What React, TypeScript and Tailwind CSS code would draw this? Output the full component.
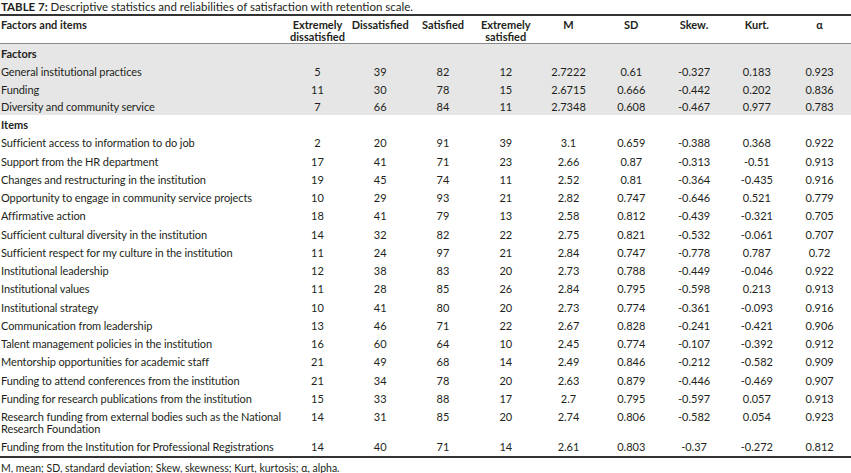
const factors = [
  ["General institutional practices", "5", "39", "82", "12", "2.7222", "0.61", "-0.327", "0.183", "0.923"],
  ["Funding", "11", "30", "78", "15", "2.6715", "0.666", "-0.442", "0.202", "0.836"],
  ["Diversity and community service", "7", "66", "84", "11", "2.7348", "0.608", "-0.467", "0.977", "0.783"],
];

const items = [
  ["Sufficient access to information to do job", "2", "20", "91", "39", "3.1", "0.659", "-0.388", "0.368", "0.922"],
  ["Support from the HR department", "17", "41", "71", "23", "2.66", "0.87", "-0.313", "-0.51", "0.913"],
  ["Changes and restructuring in the institution", "19", "45", "74", "11", "2.52", "0.81", "-0.364", "-0.435", "0.916"],
  ["Opportunity to engage in community service projects", "10", "29", "93", "21", "2.82", "0.747", "-0.646", "0.521", "0.779"],
  ["Affirmative action", "18", "41", "79", "13", "2.58", "0.812", "-0.439", "-0.321", "0.705"],
  ["Sufficient cultural diversity in the institution", "14", "32", "82", "22", "2.75", "0.821", "-0.532", "-0.061", "0.707"],
  ["Sufficient respect for my culture in the institution", "11", "24", "97", "21", "2.84", "0.747", "-0.778", "0.787", "0.72"],
  ["Institutional leadership", "12", "38", "83", "20", "2.73", "0.788", "-0.449", "-0.046", "0.922"],
  ["Institutional values", "11", "28", "85", "26", "2.84", "0.795", "-0.598", "0.213", "0.913"],
  ["Institutional strategy", "10", "41", "80", "20", "2.73", "0.774", "-0.361", "-0.093", "0.916"],
  ["Communication from leadership", "13", "46", "71", "22", "2.67", "0.828", "-0.241", "-0.421", "0.906"],
  ["Talent management policies in the institution", "16", "60", "64", "10", "2.45", "0.774", "-0.107", "-0.392", "0.912"],
  ["Mentorship opportunities for academic staff", "21", "49", "68", "14", "2.49", "0.846", "-0.212", "-0.582", "0.909"],
  ["Funding to attend conferences from the institution", "21", "34", "78", "20", "2.63", "0.879", "-0.446", "-0.469", "0.907"],
  ["Funding for research publications from the institution", "15", "33", "88", "17", "2.7", "0.795", "-0.597", "0.057", "0.913"],
  ["Research funding from external bodies such as the National\nResearch Foundation", "14", "31", "85", "20", "2.74", "0.806", "-0.582", "0.054", "0.923"],
  ["Funding from the Institution for Professional Registrations", "14", "40", "71", "14", "2.61", "0.803", "-0.37", "-0.272", "0.812"],
];

const headers = [
  ["Extremely", "dissatisfied"],
  ["Dissatisfied"],
  ["Satisfied"],
  ["Extremely", "satisfied"],
  ["M"],
  ["SD"],
  ["Skew."],
  ["Kurt."],
  ["α"],
];

function Row({ cells, shaded }: { cells: string[]; shaded?: boolean }) {
  return (
    <tr className={shaded ? "bg-[#e6e6e6]" : ""}>
      {cells.map((c, i) => (
        <td
          key={i}
          className={`align-top pt-[4px] ${shaded ? "pb-[1.75px]" : "pb-[2.25px]"} leading-[12px] ${
            i === 0 ? "text-left pl-[1px] whitespace-pre tracking-[-0.1px]" : "text-center"
          }`}
        >
          {c}
        </td>
      ))}
    </tr>
  );
}

function Label({ text, shaded }: { text: string; shaded?: boolean }) {
  return (
    <tr className={shaded ? "bg-[#e6e6e6]" : ""}>
      <td colSpan={10} className={`pt-[4px] ${shaded ? "pb-[1.75px]" : "pb-[2.25px]"} leading-[12px] pl-[1px] font-bold`}>
        {text}
      </td>
    </tr>
  );
}

export default function App() {
  return (
    <div className="w-[851px] h-[473px] bg-white text-[#231f20] font-['Lato',sans-serif] text-[11px] overflow-hidden">
      <div className="h-[14px] leading-[13px] text-[11.5px] pl-[1px]">
        <span className="font-bold">TABLE 7:</span> Descriptive statistics and reliabilities of satisfaction with retention scale.
      </div>
      <table className="w-full table-fixed border-collapse border-t-2 border-b-2 border-[#333]">
        <colgroup>
          <col className="w-[286px]" />
          {headers.map((_, i) => (
            <col key={i} className="w-[62.75px]" />
          ))}
        </colgroup>
        <thead>
          <tr className="border-b border-[#8a8a8a]">
            <th className="text-left align-top font-bold pt-[3px] pb-[1px] leading-[11.5px] pl-[1px]">Factors and items</th>
            {headers.map((h, i) => (
              <th key={i} className="align-top font-bold pt-[3px] pb-[1px] leading-[11.5px] text-center">
                {h.map((l, j) => (
                  <div key={j}>{l}</div>
                ))}
              </th>
            ))}
          </tr>
        </thead>
        <tbody>
          <Label text="Factors" shaded />
          {factors.map((r, i) => (
            <Row key={i} cells={r} shaded />
          ))}
          <Label text="Items" />
          {items.map((r, i) => (
            <Row key={i} cells={r} />
          ))}
        </tbody>
      </table>
      <div className="pt-[4px] leading-[12px] text-[10.5px] pl-[1px]">
        M, mean; SD, standard deviation; Skew, skewness; Kurt, kurtosis; α, alpha.
      </div>
    </div>
  );
}
